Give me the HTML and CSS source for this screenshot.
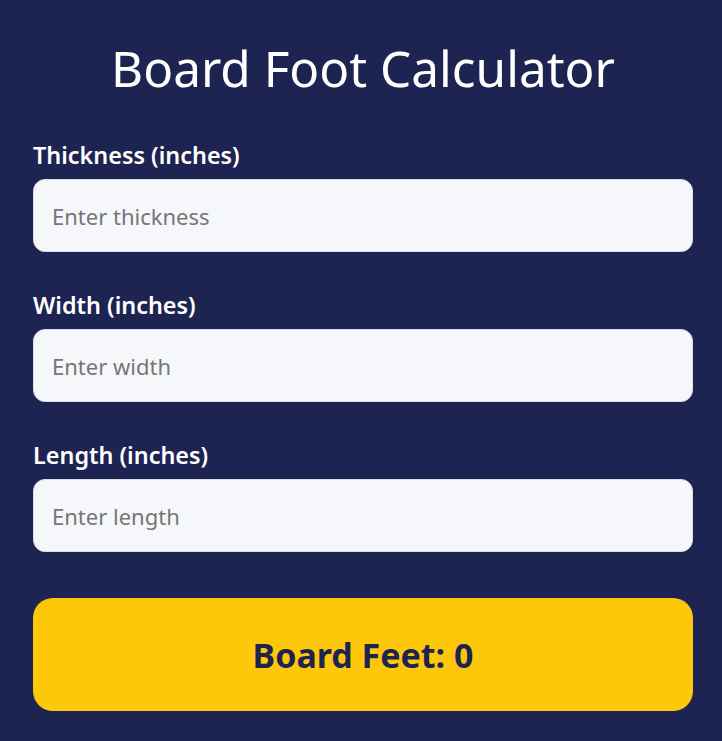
FILE: index.html
```html
<!DOCTYPE html>
<html lang="en">
<head>
<meta charset="utf-8">
<title>Board Foot Calculator</title>
<link rel="stylesheet" href="styles.css">
</head>
<body>
<main class="calc">
  <h1 class="title">Board Foot Calculator</h1>
  <div class="field">
    <label class="label" for="t">Thickness (inches)</label>
    <input class="input" id="t" type="number" placeholder="Enter thickness">
  </div>
  <div class="field">
    <label class="label" for="w">Width (inches)</label>
    <input class="input" id="w" type="number" placeholder="Enter width">
  </div>
  <div class="field">
    <label class="label" for="l">Length (inches)</label>
    <input class="input" id="l" type="number" placeholder="Enter length">
  </div>
  <div class="result">Board Feet: 0</div>
</main>
</body>
</html>
```
FILE: styles.css
```css
html, body {
  margin: 0;
  padding: 0;
  background: #1e2451;
}
body {
  font-family: "Noto Sans", "Open Sans", sans-serif;
  color: #ffffff;
}
.calc {
  padding: 32px 29px 30px 33px;
  display: flex;
  flex-direction: column;
}
.title {
  margin: 0 0 36px;
  font-size: 49.5px;
  font-weight: 400;
  line-height: 72px;
  text-align: center;
}
.field {
  display: flex;
  flex-direction: column;
  gap: 9px;
  margin-bottom: 38px;
}
.label {
  font-size: 23.4px;
  font-weight: 600;
  line-height: 30px;
}
.input {
  box-sizing: border-box;
  height: 73px;
  padding: 0 18px;
  border: 1px solid #d8dde6;
  border-radius: 12px;
  background: #f5f7fa;
  font-family: inherit;
  font-size: 22px;
  color: #333;
  outline: none;
}
.input::placeholder {
  color: #767676;
}
.result {
  margin-top: 8px;
  height: 113px;
  border-radius: 20px;
  background: #fec80a;
  color: #1e2451;
  font-size: 34px;
  font-weight: 700;
  display: flex;
  align-items: center;
  justify-content: center;
}
```
